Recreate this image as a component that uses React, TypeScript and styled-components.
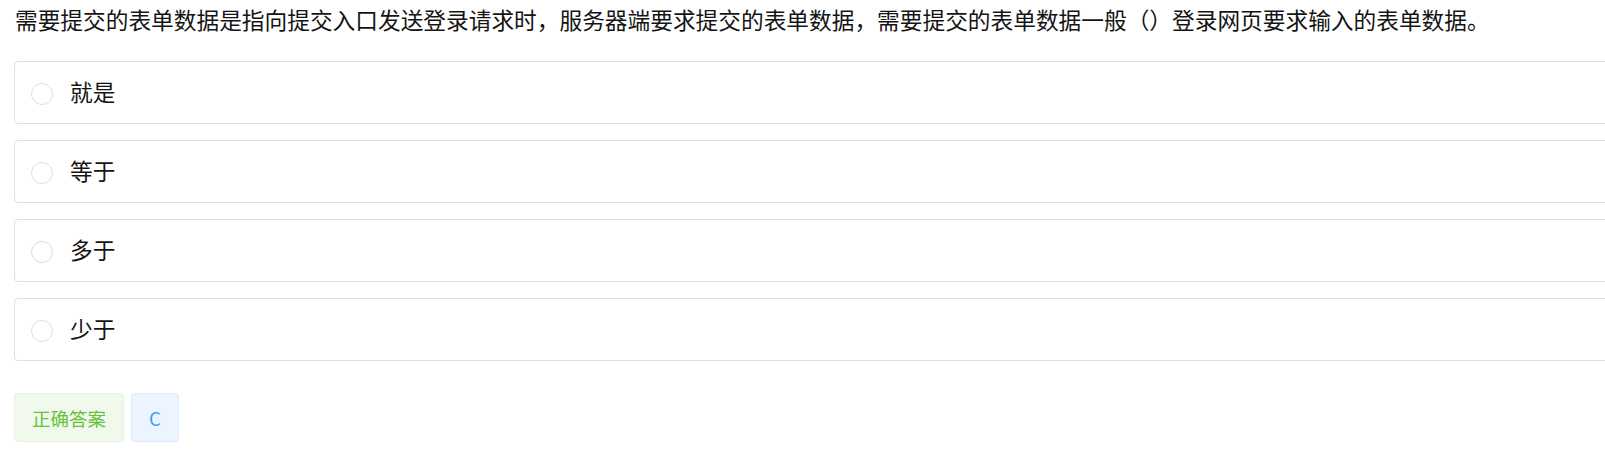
import { createGlobalStyle, styled } from 'styled-components';

const GlobalStyle = createGlobalStyle`
  html, body {
    margin: 0;
    padding: 0;
    overflow: hidden;
    background: #ffffff;
  }
  body {
    font-family: "Liberation Serif", "Noto Sans CJK SC", serif;
    color: #141414;
    text-spacing-trim: space-all;
  }
`;

const options = ['就是', '等于', '多于', '少于'];

const App = () => {
  return (
    <>
      <GlobalStyle />
      <Styled_Quiz.Container>
        <Styled_Quiz.Question>
          需要提交的表单数据是指向提交入口发送登录请求时，服务器端要求提交的表单数据，需要提交的表单数据一般（）登录网页要求输入的表单数据。
        </Styled_Quiz.Question>
        <Styled_Quiz.Options>
          {options.map((v, i) => (
            <Styled_Quiz.Option key={i}>
              <Styled_Quiz.Radio />
              <Styled_Quiz.Label>{v}</Styled_Quiz.Label>
            </Styled_Quiz.Option>
          ))}
        </Styled_Quiz.Options>
        <Styled_Quiz.Actions>
          <Styled_Quiz.Tag $kind="success">正确答案</Styled_Quiz.Tag>
          <Styled_Quiz.Tag $kind="primary">C</Styled_Quiz.Tag>
        </Styled_Quiz.Actions>
      </Styled_Quiz.Container>
    </>
  );
};

export default App;

const tagColors = {
  success: { bg: '#f0f9eb', border: '#e1f3d8', text: '#67c23a' },
  primary: { bg: '#ecf5ff', border: '#d9ecff', text: '#409eff' },
};

const Styled_Quiz = {
  Container: styled.div`
    padding: 7px 0 0 14px;
    width: 1700px;
  `,
  Question: styled.p`
    margin: 0 0 24px 1px;
    font-size: 22.7px;
    line-height: 30px;
    white-space: nowrap;
  `,
  Options: styled.div`
    display: flex;
    flex-direction: column;
    gap: 16px;
  `,
  Option: styled.label`
    box-sizing: border-box;
    height: 63px;
    display: flex;
    align-items: center;
    padding: 2px 0 0 16px;
    border: 1px solid #dcdfe6;
    border-radius: 4px;
    cursor: pointer;
  `,
  Radio: styled.span`
    box-sizing: border-box;
    width: 22px;
    height: 22px;
    border: 1px solid #dcdfe6;
    border-radius: 50%;
    background: #ffffff;
    flex-shrink: 0;
  `,
  Label: styled.span`
    margin-left: 17px;
    font-size: 22.7px;
    line-height: 30px;
  `,
  Actions: styled.div`
    display: flex;
    gap: 7px;
    margin-top: 32px;
  `,
  Tag: styled.span<{ $kind: 'success' | 'primary' }>`
    box-sizing: border-box;
    height: 49px;
    display: inline-flex;
    align-items: center;
    padding: 0 17px;
    font-family: "Noto Sans CJK SC", sans-serif;
    font-size: 18.5px;
    border-radius: 4px;
    background: ${(p) => tagColors[p.$kind].bg};
    border: 1px solid ${(p) => tagColors[p.$kind].border};
    color: ${(p) => tagColors[p.$kind].text};
  `,
};
